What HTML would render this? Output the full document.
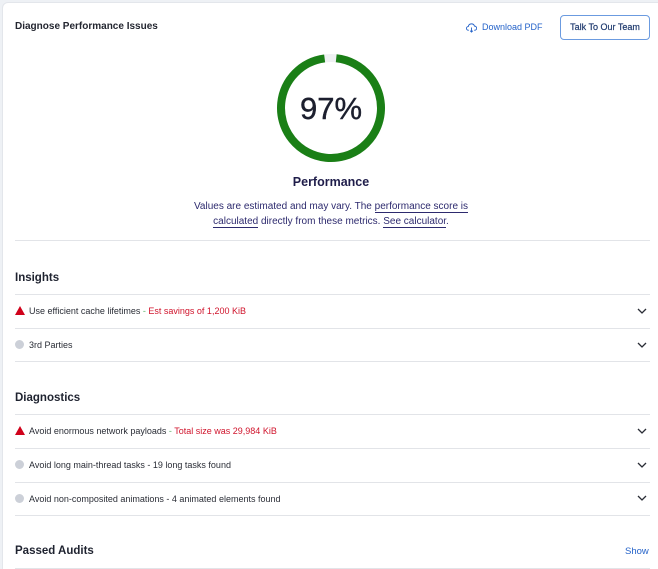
<!DOCTYPE html>
<html><head><style>
*{margin:0;padding:0;box-sizing:border-box}
html,body{width:658px;height:569px;overflow:hidden}
body{background:#eef1f5;font-family:"Liberation Sans",sans-serif;position:relative;color:#1f2330}
.card{position:absolute;left:2px;top:2px;width:670px;height:580px;background:#fff;border:1px solid #e3e6eb;border-radius:6px}
.a{position:absolute;white-space:nowrap}
.hr{position:absolute;left:15px;width:635px;height:1px;background:#e2e4e8}
.row{position:absolute;left:15px;font-size:9px;color:#2a2d36;line-height:12px}
.dot{display:inline-block;width:9px;height:9px;border-radius:50%;background:#ccd0d8;vertical-align:-1px;margin-right:5px}
.tri{display:inline-block;width:0;height:0;border-left:5px solid transparent;border-right:5px solid transparent;border-bottom:9px solid #d0021b;vertical-align:-1px;margin-right:4px}
.red{color:#d0142c}.g{color:#5bb36a}
.chev{position:absolute;left:637px;width:10px;height:6px}
h3{position:absolute;left:15px;font-size:11.5px;font-weight:bold;color:#1f2330}
u{text-decoration:none;border-bottom:1px solid #2d2a6e}
</style></head><body>
<div class="card"></div>
<div class="a" style="left:15px;top:21px;font-size:10px;font-weight:bold;color:#232630">Diagnose Performance Issues</div>
<svg class="a" style="left:466px;top:22px" width="11" height="11" viewBox="0 0 12 12"><path d="M3 9H2.5A2 2 0 0 1 2.5 5 3.5 3.5 0 0 1 9.3 4.5 2.2 2.2 0 0 1 9.5 9H9M6 6v5M4.5 9.5L6 11l1.5-1.5" fill="none" stroke="#2563c9" stroke-width="1"/></svg>
<div class="a" style="left:482px;top:22px;font-size:9px;color:#2563c9">Download PDF</div>
<div class="a" style="left:560px;top:15px;width:90px;height:25px;border:1px solid #6b9be0;border-radius:4px;font-size:9px;color:#1f3a6e;text-align:center;line-height:23px;-webkit-text-stroke:0.2px #1f3a6e">Talk To Our Team</div>
<svg class="a" style="left:276px;top:53px" width="110" height="110" viewBox="0 0 110 110"><circle cx="55" cy="55" r="50" fill="none" stroke="#eef0f2" stroke-width="8"/><circle cx="55" cy="55" r="50" fill="none" stroke="#1a7f16" stroke-width="8" stroke-dasharray="302 314.16" transform="rotate(-84 55 55)"/></svg>
<div class="a" style="left:276px;top:91px;width:110px;text-align:center;font-size:31px;color:#1c1f2e;-webkit-text-stroke:0.4px #1c1f2e">97%</div>
<div class="a" style="left:231px;top:175px;width:200px;text-align:center;font-size:12.5px;font-weight:bold;color:#1f1d4a">Performance</div>
<div class="a" style="left:150px;top:199px;width:362px;text-align:center;font-size:10px;line-height:15px;color:#2d2a6e">Values are estimated and may vary. The <u>performance score is</u><br><u>calculated</u> directly from these metrics. <u>See calculator</u>.</div>
<div class="hr" style="top:240px"></div>
<h3 style="top:272px">Insights</h3>
<div class="hr" style="top:294px"></div>
<div class="row" style="top:305px"><span class="tri"></span>Use efficient cache lifetimes <span class="g">-</span> <span class="red">Est savings of 1,200 KiB</span></div>
<div class="hr" style="top:328px"></div>
<div class="row" style="top:339px"><span class="dot"></span>3rd Parties</div>
<div class="hr" style="top:361px"></div>
<h3 style="top:392px">Diagnostics</h3>
<div class="hr" style="top:414px"></div>
<div class="row" style="top:425px"><span class="tri"></span>Avoid enormous network payloads <span class="g">-</span> <span class="red">Total size was 29,984 KiB</span></div>
<div class="hr" style="top:448px"></div>
<div class="row" style="top:459px"><span class="dot"></span>Avoid long main-thread tasks - 19 long tasks found</div>
<div class="hr" style="top:482px"></div>
<div class="row" style="top:493px"><span class="dot"></span>Avoid non-composited animations - 4 animated elements found</div>
<div class="hr" style="top:515px"></div>
<h3 style="top:545px">Passed Audits</h3>
<div class="a" style="left:625px;top:546px;font-size:9.5px;color:#2563c9">Show</div>
<div class="hr" style="top:568px"></div>
<svg class="chev" style="top:308px" viewBox="0 0 10 6"><path d="M1 1l4 4 4-4" fill="none" stroke="#2a2d36" stroke-width="1.3"/></svg>
<svg class="chev" style="top:342px" viewBox="0 0 10 6"><path d="M1 1l4 4 4-4" fill="none" stroke="#2a2d36" stroke-width="1.3"/></svg>
<svg class="chev" style="top:428px" viewBox="0 0 10 6"><path d="M1 1l4 4 4-4" fill="none" stroke="#2a2d36" stroke-width="1.3"/></svg>
<svg class="chev" style="top:462px" viewBox="0 0 10 6"><path d="M1 1l4 4 4-4" fill="none" stroke="#2a2d36" stroke-width="1.3"/></svg>
<svg class="chev" style="top:495px" viewBox="0 0 10 6"><path d="M1 1l4 4 4-4" fill="none" stroke="#2a2d36" stroke-width="1.3"/></svg>
</body></html>
